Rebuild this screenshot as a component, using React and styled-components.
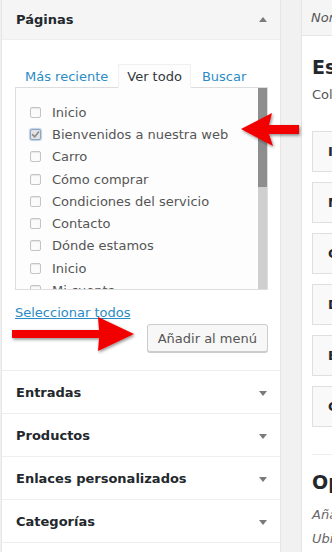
import React from "react";
import styled, { createGlobalStyle } from "styled-components";

const GlobalStyle = createGlobalStyle`
    html, body {
        margin: 0;
        padding: 0;
        background: #f1f1f1;
        overflow: hidden;
    }
    body {
        font-family: "DejaVu Sans", "Open Sans", sans-serif;
        font-size: 13px;
        color: #444;
    }
`

const pages = [
    { title: "Inicio" },
    { title: "Bienvenidos a nuestra web", checked: true },
    { title: "Carro" },
    { title: "Cómo comprar" },
    { title: "Condiciones del servicio" },
    { title: "Contacto" },
    { title: "Dónde estamos" },
    { title: "Inicio" },
    { title: "Mi cuenta" },
    { title: "Nosotros" },
]

const sections = ["Entradas", "Productos", "Enlaces personalizados", "Categorías", "Etiquetas"]

const menuItems = ["Inicio", "Mi cuenta", "Carro", "Dónde estamos", "Bienvenidos a nuestra web", "Contacto"]

const Caret = ({ up }) => {
    return (
        <svg width="8" height="6" viewBox="0 0 8 6">
            {up
                ? <polygon points="0,5 8,5 4,0" fill="#7a7a7a" />
                : <polygon points="0,1 8,1 4,6" fill="#7a7a7a" />}
        </svg>
    )
}

const CheckMark = () => {
    return (
        <svg width="9" height="9" viewBox="0 0 9 9">
            <path d="M1.5 4.6L3.7 6.8L7.6 2" stroke="#8a8a8a" strokeWidth="1.6" fill="none" strokeLinecap="round" />
        </svg>
    )
}

const Arrows = () => {
    return (
        <Overlay width="332" height="552" viewBox="0 0 332 552">
            <defs>
                <filter id="shade" x="-20%" y="-40%" width="140%" height="180%">
                    <feDropShadow dx="1" dy="1.5" stdDeviation="1.5" floodColor="#000" floodOpacity="0.45" />
                </filter>
            </defs>
            <g filter="url(#shade)" fill="#f20000">
                <polygon points="241,129 272,113 269,125 299,125 299,134 269,134 273,146" />
                <polygon points="12,330 99,330 98,317 134,334 98,351 99,338 12,338" />
            </g>
        </Overlay>
    )
}

const App = () => {
    return (
        <Page>
            <GlobalStyle />
            <Sidebar>
                <Section>
                    <SectionHeader open>
                        <span>Páginas</span>
                        <Caret up />
                    </SectionHeader>
                    <SectionBody>
                        <Tabs>
                            <Tab>Más reciente</Tab>
                            <Tab active>Ver todo</Tab>
                            <Tab>Buscar</Tab>
                        </Tabs>
                        <ListBox>
                            <PageList>
                                {pages.map((page, i) => (
                                    <ListItem key={i}>
                                        <Checkbox checked={page.checked}>
                                            {page.checked && <CheckMark />}
                                        </Checkbox>
                                        {page.title}
                                    </ListItem>
                                ))}
                            </PageList>
                            <ScrollTrack>
                                <ScrollThumb />
                            </ScrollTrack>
                        </ListBox>
                        <SelectAll href="#">Seleccionar todos</SelectAll>
                        <ButtonRow>
                            <AddButton>Añadir al menú</AddButton>
                        </ButtonRow>
                    </SectionBody>
                </Section>
                {sections.map((title) => (
                    <Section key={title}>
                        <SectionHeader>
                            <span>{title}</span>
                            <Caret />
                        </SectionHeader>
                    </Section>
                ))}
            </Sidebar>
            <MenuPanel>
                <MenuHeader>Nombre del menú</MenuHeader>
                <MenuBody>
                    <MenuTitle>Estructura del menú</MenuTitle>
                    <MenuHint>Colocar cada elemento en el orden que prefieras.</MenuHint>
                    <MenuList>
                        {menuItems.map((item) => (
                            <MenuItem key={item}>{item}</MenuItem>
                        ))}
                    </MenuList>
                    <Divider />
                    <MenuTitle>Opciones del menú</MenuTitle>
                    <OptionText>Añadir páginas automáticamente</OptionText>
                    <OptionText>Ubicación en el tema</OptionText>
                </MenuBody>
            </MenuPanel>
            <Arrows />
        </Page>
    )
}

export default App;

const Page = styled.div`
    position: relative;
    display: flex;
    align-items: flex-start;
    width: 332px;
    height: 552px;
    overflow: hidden;
    padding-left: 1px;
    box-sizing: border-box;
    background: #f1f1f1;
`

const Overlay = styled.svg`
    position: absolute;
    left: 0;
    top: 0;
    pointer-events: none;
`

const Sidebar = styled.div`
    flex: 0 0 280px;
    background: #fff;
    border-left: 1px solid #e5e5e5;
    border-right: 1px solid #e5e5e5;
    box-sizing: border-box;
`

const Section = styled.div`
    border-bottom: 1px solid #eee;
    background: #fff;
`

const SectionHeader = styled.div`
    display: flex;
    align-items: center;
    justify-content: space-between;
    height: ${props => props.open ? "40px" : "42px"};
    padding: 0 13px 0 14px;
    background: ${props => props.open ? "#f5f5f5" : "#fff"};
    border-bottom: ${props => props.open ? "1px solid #eee" : "none"};
    font-size: 13px;
    font-weight: 700;
    color: #23282d;
    box-sizing: border-box;

    svg {
        margin-top: 1px;
    }
`

const SectionBody = styled.div`
    padding: 24px 12px 18px 13px;
`

const Tabs = styled.ul`
    display: flex;
    margin: 0 0 -1px;
    padding: 0;
    list-style: none;
`

const Tab = styled.li`
    height: 24px;
    line-height: 23px;
    padding: 0 ${props => props.active ? "8px" : "9px"};
    margin-right: ${props => props.active ? "1px" : "0"};
    box-sizing: border-box;
    font-size: 13px;
    color: ${props => props.active ? "#32373c" : "#2b8bc6"};
    background: ${props => props.active ? "#fdfdfd" : "transparent"};
    border: 1px solid ${props => props.active ? "#f0f0f0" : "transparent"};
    border-bottom-color: ${props => props.active ? "#fdfdfd" : "transparent"};
`

const ListBox = styled.div`
    display: flex;
    height: 203px;
    background: #fdfdfd;
    border: 1px solid #ddd;
    box-sizing: border-box;
    overflow: hidden;
`

const PageList = styled.ul`
    flex: 1;
    margin: 0;
    padding: 13px 0 0 14px;
    list-style: none;
`

const ListItem = styled.li`
    display: flex;
    align-items: center;
    height: 22.3px;
    font-size: 13px;
    color: #555;
    white-space: nowrap;
`

const ScrollTrack = styled.div`
    flex: 0 0 9px;
    background: #cfcfcf;
`

const ScrollThumb = styled.div`
    height: 99px;
    background: #8e8e8e;
`

const Checkbox = styled.span`
    display: inline-flex;
    align-items: center;
    justify-content: center;
    width: 11px;
    height: 11px;
    margin-right: 11px;
    border: 1px solid ${props => props.checked ? "#8aa6c8" : "#c4c4c4"};
    border-radius: 2px;
    background: ${props => props.checked ? "#e3e3e3" : "#fbfbfb"};
    box-shadow: ${props => props.checked ? "0 0 1px 1px rgba(120, 150, 200, 0.45)" : "inset 0 1px 1px rgba(0, 0, 0, 0.08)"};
    box-sizing: border-box;
`

const SelectAll = styled.a`
    display: inline-block;
    margin-top: 14px;
    font-size: 13px;
    line-height: 18px;
    color: #2b8bc6;
    text-decoration: underline;
`

const ButtonRow = styled.div`
    display: flex;
    justify-content: flex-end;
    margin-top: 2px;
`

const AddButton = styled.button`
    height: 28px;
    padding: 0 10px;
    font-family: "DejaVu Sans", "Open Sans", sans-serif;
    font-size: 13px;
    color: #555;
    background: #f7f7f7;
    border: 1px solid #ccc;
    border-radius: 3px;
    box-shadow: 0 1px 0 #ccc;
`

const MenuPanel = styled.div`
    flex: 0 0 420px;
    margin-left: 20px;
    min-height: 552px;
    background: #fff;
    border-left: 1px solid #e5e5e5;
`

const MenuHeader = styled.div`
    height: 36px;
    line-height: 35px;
    padding-left: 9px;
    font-style: italic;
    color: #555;
    background: #f5f5f5;
    border-bottom: 1px solid #e5e5e5;
    box-sizing: border-box;
`

const MenuBody = styled.div`
    padding: 18px 0 0 10px;
`

const MenuTitle = styled.h3`
    margin: 0;
    font-size: 19px;
    line-height: 26px;
    font-weight: 700;
    color: #23282d;
`

const MenuHint = styled.p`
    margin: 6px 0 0;
    line-height: 18px;
    color: #555;
`

const MenuList = styled.div`
    display: flex;
    flex-direction: column;
    gap: 10px;
    margin-top: 27px;
`

const MenuItem = styled.div`
    height: 41px;
    line-height: 39px;
    padding-left: 15px;
    font-weight: 700;
    color: #23282d;
    background: #f9f9f9;
    border: 1px solid #dfdfdf;
    box-sizing: border-box;
`

const Divider = styled.hr`
    margin: 27px 0 14px;
    border: 0;
    border-top: 1px solid #eee;
`

const OptionText = styled.p`
    margin: 11px 0 0;
    line-height: 18px;
    font-style: italic;
    color: #666;

    & + & {
        margin-top: 6px;
    }
`
